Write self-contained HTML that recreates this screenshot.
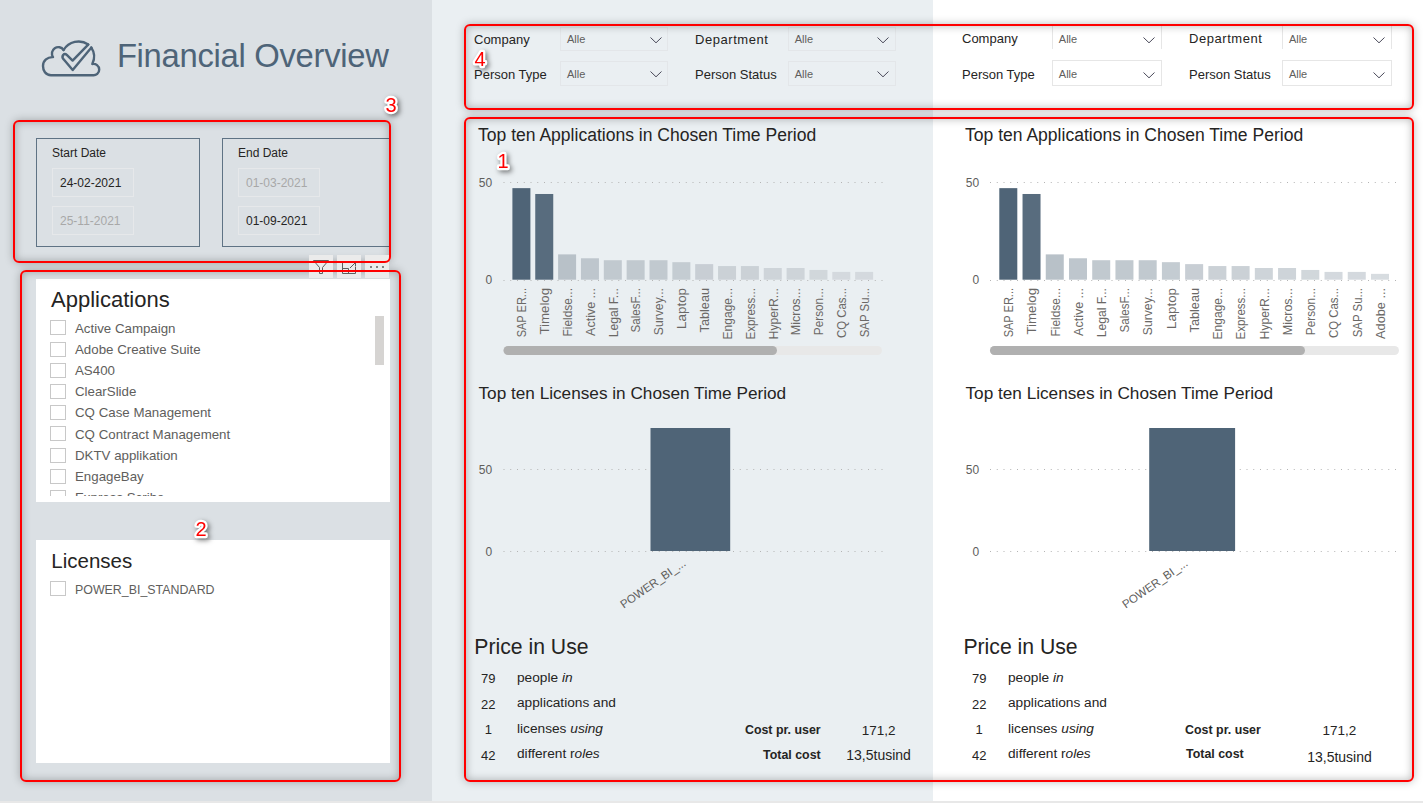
<!DOCTYPE html>
<html><head><meta charset="utf-8"><title>Financial Overview</title>
<style>
html,body{margin:0;padding:0;width:1423px;height:803px;overflow:hidden;background:#fff}
body{position:relative;font-family:"Liberation Sans", sans-serif}
.r{position:absolute}
.t{position:absolute;white-space:nowrap;line-height:1}
.lab{font-size:17px;font-weight:700;color:#ff0000;text-shadow:-1px -1px 0 #fff,1px -1px 0 #fff,-1px 1px 0 #fff,1px 1px 0 #fff,0 0 1px #fff,1px 2px 3px rgba(0,0,0,.35)}
</style></head><body>
<div class="r" style="left:0px;top:0px;width:432px;height:801px;background:#dbe0e4"></div>
<div class="r" style="left:432px;top:0px;width:501px;height:801px;background:#eaeff2"></div>
<div class="r" style="left:933px;top:0px;width:490px;height:801px;background:#ffffff"></div>
<div class="r" style="left:0px;top:801px;width:1423px;height:2px;background:#e8e8e8"></div>
<svg class="r" style="left:0;top:0" width="432" height="120" viewBox="0 0 432 120">
<g fill="none" stroke="#4e6478" stroke-width="2.4" stroke-linecap="round" stroke-linejoin="round">
<path d="M63.6,50 A17.5,17.5 0 0 1 88.3,44.4"/>
<path d="M91.2,47.4 A16.6,16.6 0 0 1 92.3,64 A5.7,5.7 0 1 1 92.6,75.2 L51,75.2 C45.5,75.2 43,70.5 43,66 C43,60.5 47.5,56.8 53,57.1 A6.3,6.3 0 0 1 63.6,50"/>
<path d="M88.2,44.6 L72.6,60.6 L66.8,54.9 Q64.8,53.1 63.1,55 Q61.6,57.3 63.6,59.3 L72.7,70 L91.4,47.6"/>
</g></svg>
<div class="t" style="left:116.90px;top:39.90px;font-size:32.8px;color:#4e6478;letter-spacing:-0.3px">Financial Overview</div>
<div class="r" style="left:36px;top:138px;width:164px;height:109px;border:1px solid #5f7384;box-sizing:border-box"></div>
<div class="r" style="left:222px;top:138px;width:178px;height:109px;border:1px solid #5f7384;box-sizing:border-box"></div>
<div class="t" style="left:52.00px;top:147.01px;font-size:12px;color:#252423;">Start Date</div>
<div class="t" style="left:238.00px;top:147.01px;font-size:12px;color:#252423;">End Date</div>
<div class="r" style="left:52px;top:168px;width:82px;height:29px;border:1px solid #e6e8ea;box-sizing:border-box"></div>
<div class="t" style="left:60.00px;top:177.01px;font-size:12px;color:#252423;">24-02-2021</div>
<div class="r" style="left:52px;top:206px;width:82px;height:29px;border:1px solid #e6e8ea;box-sizing:border-box"></div>
<div class="t" style="left:60.00px;top:215.01px;font-size:12px;color:#a8a8a8;">25-11-2021</div>
<div class="r" style="left:238px;top:168px;width:82px;height:29px;border:1px solid #e6e8ea;box-sizing:border-box"></div>
<div class="t" style="left:246.00px;top:177.01px;font-size:12px;color:#a8a8a8;">01-03-2021</div>
<div class="r" style="left:238px;top:206px;width:82px;height:29px;border:1px solid #e6e8ea;box-sizing:border-box"></div>
<div class="t" style="left:246.00px;top:215.01px;font-size:12px;color:#252423;">01-09-2021</div>
<div class="r" style="left:390px;top:130px;width:42px;height:120px;background:#dbe0e4"></div>
<div class="r" style="left:36px;top:279px;width:354px;height:223px;background:#ffffff"></div>
<div class="t" style="left:51.00px;top:289.01px;font-size:22px;color:#252423;">Applications</div>
<div class="r" style="left:36px;top:314px;width:354px;height:182px;overflow:hidden">
<div class="r" style="left:14px;top:6.30px;width:15.5px;height:15px;border:1px solid #c8c8c8;box-sizing:border-box"></div>
<div class="t" style="left:39px;top:7.54px;font-size:13.3px;color:#605e5c">Active Campaign</div>
<div class="r" style="left:14px;top:27.50px;width:15.5px;height:15px;border:1px solid #c8c8c8;box-sizing:border-box"></div>
<div class="t" style="left:39px;top:28.74px;font-size:13.3px;color:#605e5c">Adobe Creative Suite</div>
<div class="r" style="left:14px;top:48.70px;width:15.5px;height:15px;border:1px solid #c8c8c8;box-sizing:border-box"></div>
<div class="t" style="left:39px;top:49.94px;font-size:13.3px;color:#605e5c">AS400</div>
<div class="r" style="left:14px;top:69.90px;width:15.5px;height:15px;border:1px solid #c8c8c8;box-sizing:border-box"></div>
<div class="t" style="left:39px;top:71.14px;font-size:13.3px;color:#605e5c">ClearSlide</div>
<div class="r" style="left:14px;top:91.10px;width:15.5px;height:15px;border:1px solid #c8c8c8;box-sizing:border-box"></div>
<div class="t" style="left:39px;top:92.34px;font-size:13.3px;color:#605e5c">CQ Case Management</div>
<div class="r" style="left:14px;top:112.30px;width:15.5px;height:15px;border:1px solid #c8c8c8;box-sizing:border-box"></div>
<div class="t" style="left:39px;top:113.54px;font-size:13.3px;color:#605e5c">CQ Contract Management</div>
<div class="r" style="left:14px;top:133.50px;width:15.5px;height:15px;border:1px solid #c8c8c8;box-sizing:border-box"></div>
<div class="t" style="left:39px;top:134.74px;font-size:13.3px;color:#605e5c">DKTV applikation</div>
<div class="r" style="left:14px;top:154.70px;width:15.5px;height:15px;border:1px solid #c8c8c8;box-sizing:border-box"></div>
<div class="t" style="left:39px;top:155.94px;font-size:13.3px;color:#605e5c">EngageBay</div>
<div class="r" style="left:14px;top:175.90px;width:15.5px;height:15px;border:1px solid #c8c8c8;box-sizing:border-box"></div>
<div class="t" style="left:39px;top:177.14px;font-size:13.3px;color:#605e5c">Express Scribe</div>
</div>
<div class="r" style="left:375px;top:316px;width:9px;height:49px;background:#d6d4d2"></div>
<div class="r" style="left:36px;top:540px;width:354px;height:223px;background:#ffffff"></div>
<div class="t" style="left:51.30px;top:550.80px;font-size:20.5px;color:#252423;">Licenses</div>
<div class="r" style="left:50px;top:581px;width:16px;height:15px;border:1px solid #c8c8c8;box-sizing:border-box"></div>
<div class="t" style="left:75.00px;top:584.00px;font-size:12.4px;color:#605e5c;">POWER_BI_STANDARD</div>
<div class="t" style="left:474.00px;top:32.61px;font-size:13px;color:#252423;">Company</div>
<div class="t" style="left:474.00px;top:68.01px;font-size:13px;color:#252423;">Person Type</div>
<div class="r" style="left:560.2px;top:27px;width:107.8px;height:23.5px;border:1px solid #e3e6e9;box-sizing:border-box"></div>
<div class="t" style="left:567.00px;top:34.11px;font-size:11px;color:#605e5c;">Alle</div>
<svg class="r" style="left:648.5px;top:34.7px" width="14" height="10"><path d="M1.5,2.5 L7,7.8 L12.5,2.5" fill="none" stroke="#4a4a5a" stroke-width="1"/></svg>
<div class="r" style="left:560.2px;top:60.5px;width:107.8px;height:25.0px;border:1px solid #e3e6e9;box-sizing:border-box"></div>
<div class="t" style="left:567.00px;top:68.91px;font-size:11px;color:#605e5c;">Alle</div>
<svg class="r" style="left:648.5px;top:69px" width="14" height="10"><path d="M1.5,2.5 L7,7.8 L12.5,2.5" fill="none" stroke="#4a4a5a" stroke-width="1"/></svg>
<div class="t" style="left:695.00px;top:32.61px;font-size:13px;color:#252423;letter-spacing:0.55px">Department</div>
<div class="t" style="left:695.00px;top:68.01px;font-size:13px;color:#252423;">Person Status</div>
<div class="r" style="left:787.9000000000001px;top:27px;width:107.8px;height:23.5px;border:1px solid #e3e6e9;box-sizing:border-box"></div>
<div class="t" style="left:794.70px;top:34.11px;font-size:11px;color:#605e5c;">Alle</div>
<svg class="r" style="left:876.2px;top:34.7px" width="14" height="10"><path d="M1.5,2.5 L7,7.8 L12.5,2.5" fill="none" stroke="#4a4a5a" stroke-width="1"/></svg>
<div class="r" style="left:787.9000000000001px;top:60.5px;width:107.8px;height:25.0px;border:1px solid #e3e6e9;box-sizing:border-box"></div>
<div class="t" style="left:794.70px;top:68.91px;font-size:11px;color:#605e5c;">Alle</div>
<svg class="r" style="left:876.2px;top:69px" width="14" height="10"><path d="M1.5,2.5 L7,7.8 L12.5,2.5" fill="none" stroke="#4a4a5a" stroke-width="1"/></svg>
<div class="t" style="left:962.00px;top:32.01px;font-size:13px;color:#252423;">Company</div>
<div class="t" style="left:962.00px;top:67.51px;font-size:13px;color:#252423;">Person Type</div>
<div class="r" style="left:1052.3px;top:24px;width:110px;height:24.700000000000003px;border-left:1px solid #e6e6e6;border-right:1px solid #e6e6e6;box-sizing:border-box"></div>
<div class="t" style="left:1058.80px;top:33.80px;font-size:11px;color:#605e5c;">Alle</div>
<svg class="r" style="left:1141.8px;top:34.6px" width="14" height="10"><path d="M1.5,2.5 L7,7.8 L12.5,2.5" fill="none" stroke="#4a4a5a" stroke-width="1"/></svg>
<div class="r" style="left:1052.3px;top:60.2px;width:110px;height:25.799999999999997px;border:1px solid #e6e6e6;box-sizing:border-box"></div>
<div class="t" style="left:1058.80px;top:68.61px;font-size:11px;color:#605e5c;">Alle</div>
<svg class="r" style="left:1141.8px;top:70px" width="14" height="10"><path d="M1.5,2.5 L7,7.8 L12.5,2.5" fill="none" stroke="#4a4a5a" stroke-width="1"/></svg>
<div class="t" style="left:1189.00px;top:32.01px;font-size:13px;color:#252423;letter-spacing:0.55px">Department</div>
<div class="t" style="left:1189.00px;top:67.51px;font-size:13px;color:#252423;">Person Status</div>
<div class="r" style="left:1282.4px;top:24px;width:110px;height:24.700000000000003px;border-left:1px solid #e6e6e6;border-right:1px solid #e6e6e6;box-sizing:border-box"></div>
<div class="t" style="left:1288.90px;top:33.80px;font-size:11px;color:#605e5c;">Alle</div>
<svg class="r" style="left:1371.9px;top:34.6px" width="14" height="10"><path d="M1.5,2.5 L7,7.8 L12.5,2.5" fill="none" stroke="#4a4a5a" stroke-width="1"/></svg>
<div class="r" style="left:1282.4px;top:60.2px;width:110px;height:25.799999999999997px;border:1px solid #e6e6e6;box-sizing:border-box"></div>
<div class="t" style="left:1288.90px;top:68.61px;font-size:11px;color:#605e5c;">Alle</div>
<svg class="r" style="left:1371.9px;top:70px" width="14" height="10"><path d="M1.5,2.5 L7,7.8 L12.5,2.5" fill="none" stroke="#4a4a5a" stroke-width="1"/></svg>
<div class="t" style="left:478.00px;top:127.02px;font-size:17.55px;color:#252423;">Top ten Applications in Chosen Time Period</div>
<div class="t" style="left:92.20px;width:400px;text-align:right;top:176.60px;font-size:12px;color:#605e5c;">50</div>
<div class="t" style="left:92.20px;width:400px;text-align:right;top:273.71px;font-size:12px;color:#605e5c;">0</div>
<svg class="r" style="left:0;top:0" width="1423" height="803"><line x1="503.5" y1="182.5" x2="884" y2="182.5" stroke="#b4b4b4" stroke-width="1" stroke-dasharray="1 5.75"/><rect x="512.40" y="188.14" width="18" height="91.56" fill="#4f6477"/><rect x="535.25" y="193.99" width="18" height="85.71" fill="#586c7e"/><rect x="558.10" y="254.38" width="18" height="25.32" fill="#b8c1c8"/><rect x="580.95" y="258.27" width="18" height="21.43" fill="#bec6cd"/><rect x="603.80" y="260.22" width="18" height="19.48" fill="#c1c9cf"/><rect x="626.65" y="260.22" width="18" height="19.48" fill="#c1c9cf"/><rect x="649.50" y="260.22" width="18" height="19.48" fill="#c1c9cf"/><rect x="672.35" y="262.17" width="18" height="17.53" fill="#c4ccd2"/><rect x="695.20" y="264.12" width="18" height="15.58" fill="#c8ced4"/><rect x="718.05" y="266.06" width="18" height="13.64" fill="#cbd1d6"/><rect x="740.90" y="266.06" width="18" height="13.64" fill="#cbd1d6"/><rect x="763.75" y="268.01" width="18" height="11.69" fill="#ced4d9"/><rect x="786.60" y="268.01" width="18" height="11.69" fill="#ced4d9"/><rect x="809.45" y="269.96" width="18" height="9.74" fill="#d1d7db"/><rect x="832.30" y="271.91" width="18" height="7.79" fill="#d4d9de"/><rect x="855.15" y="271.91" width="18" height="7.79" fill="#d4d9de"/><line x1="503.5" y1="280.5" x2="884" y2="280.5" stroke="#b4b4b4" stroke-width="1" stroke-dasharray="1 5.75"/><text x="0" y="0" transform="translate(526.20,288) rotate(-90)" text-anchor="end" font-size="12.5" fill="#6a6866" font-family="Liberation Sans" textLength="49.3" lengthAdjust="spacingAndGlyphs">SAP ER...</text><text x="0" y="0" transform="translate(549.05,288) rotate(-90)" text-anchor="end" font-size="12.5" fill="#6a6866" font-family="Liberation Sans" textLength="46.5" lengthAdjust="spacingAndGlyphs">Timelog</text><text x="0" y="0" transform="translate(571.90,288) rotate(-90)" text-anchor="end" font-size="12.5" fill="#6a6866" font-family="Liberation Sans" textLength="48.6" lengthAdjust="spacingAndGlyphs">Fieldse...</text><text x="0" y="0" transform="translate(594.75,288) rotate(-90)" text-anchor="end" font-size="12.5" fill="#6a6866" font-family="Liberation Sans" textLength="47.9" lengthAdjust="spacingAndGlyphs">Active ...</text><text x="0" y="0" transform="translate(617.60,288) rotate(-90)" text-anchor="end" font-size="12.5" fill="#6a6866" font-family="Liberation Sans" textLength="49.3" lengthAdjust="spacingAndGlyphs">Legal F...</text><text x="0" y="0" transform="translate(640.45,288) rotate(-90)" text-anchor="end" font-size="12.5" fill="#6a6866" font-family="Liberation Sans" textLength="44.4" lengthAdjust="spacingAndGlyphs">SalesF...</text><text x="0" y="0" transform="translate(663.30,288) rotate(-90)" text-anchor="end" font-size="12.5" fill="#6a6866" font-family="Liberation Sans" textLength="47.2" lengthAdjust="spacingAndGlyphs">Survey...</text><text x="0" y="0" transform="translate(686.15,288) rotate(-90)" text-anchor="end" font-size="12.5" fill="#6a6866" font-family="Liberation Sans" textLength="40.9" lengthAdjust="spacingAndGlyphs">Laptop</text><text x="0" y="0" transform="translate(709.00,288) rotate(-90)" text-anchor="end" font-size="12.5" fill="#6a6866" font-family="Liberation Sans" textLength="44.4" lengthAdjust="spacingAndGlyphs">Tableau</text><text x="0" y="0" transform="translate(731.85,288) rotate(-90)" text-anchor="end" font-size="12.5" fill="#6a6866" font-family="Liberation Sans" textLength="51.4" lengthAdjust="spacingAndGlyphs">Engage...</text><text x="0" y="0" transform="translate(754.70,288) rotate(-90)" text-anchor="end" font-size="12.5" fill="#6a6866" font-family="Liberation Sans" textLength="51.4" lengthAdjust="spacingAndGlyphs">Express...</text><text x="0" y="0" transform="translate(777.55,288) rotate(-90)" text-anchor="end" font-size="12.5" fill="#6a6866" font-family="Liberation Sans" textLength="51.4" lengthAdjust="spacingAndGlyphs">HyperR...</text><text x="0" y="0" transform="translate(800.40,288) rotate(-90)" text-anchor="end" font-size="12.5" fill="#6a6866" font-family="Liberation Sans" textLength="47.2" lengthAdjust="spacingAndGlyphs">Micros...</text><text x="0" y="0" transform="translate(823.25,288) rotate(-90)" text-anchor="end" font-size="12.5" fill="#6a6866" font-family="Liberation Sans" textLength="47.2" lengthAdjust="spacingAndGlyphs">Person...</text><text x="0" y="0" transform="translate(846.10,288) rotate(-90)" text-anchor="end" font-size="12.5" fill="#6a6866" font-family="Liberation Sans" textLength="50.0" lengthAdjust="spacingAndGlyphs">CQ Cas...</text><text x="0" y="0" transform="translate(868.95,288) rotate(-90)" text-anchor="end" font-size="12.5" fill="#6a6866" font-family="Liberation Sans" textLength="49.3" lengthAdjust="spacingAndGlyphs">SAP Su...</text><rect x="503.5" y="346" width="378.5" height="9" rx="4.5" fill="#e8e8e8"/><rect x="503.5" y="346" width="273.5" height="9" rx="4.5" fill="#b0b0b0"/></svg>
<div class="t" style="left:965.00px;top:127.02px;font-size:17.55px;color:#252423;">Top ten Applications in Chosen Time Period</div>
<div class="t" style="left:579.20px;width:400px;text-align:right;top:176.60px;font-size:12px;color:#605e5c;">50</div>
<div class="t" style="left:579.20px;width:400px;text-align:right;top:273.71px;font-size:12px;color:#605e5c;">0</div>
<svg class="r" style="left:0;top:0" width="1423" height="803"><line x1="990" y1="182.5" x2="1398" y2="182.5" stroke="#b4b4b4" stroke-width="1" stroke-dasharray="1 5.75"/><rect x="999.30" y="188.14" width="18" height="91.56" fill="#4f6477"/><rect x="1022.53" y="193.99" width="18" height="85.71" fill="#586c7e"/><rect x="1045.76" y="254.38" width="18" height="25.32" fill="#b8c1c8"/><rect x="1068.99" y="258.27" width="18" height="21.43" fill="#bec6cd"/><rect x="1092.22" y="260.22" width="18" height="19.48" fill="#c1c9cf"/><rect x="1115.45" y="260.22" width="18" height="19.48" fill="#c1c9cf"/><rect x="1138.68" y="260.22" width="18" height="19.48" fill="#c1c9cf"/><rect x="1161.91" y="262.17" width="18" height="17.53" fill="#c4ccd2"/><rect x="1185.14" y="264.12" width="18" height="15.58" fill="#c8ced4"/><rect x="1208.37" y="266.06" width="18" height="13.64" fill="#cbd1d6"/><rect x="1231.60" y="266.06" width="18" height="13.64" fill="#cbd1d6"/><rect x="1254.83" y="268.01" width="18" height="11.69" fill="#ced4d9"/><rect x="1278.06" y="268.01" width="18" height="11.69" fill="#ced4d9"/><rect x="1301.29" y="269.96" width="18" height="9.74" fill="#d1d7db"/><rect x="1324.52" y="271.91" width="18" height="7.79" fill="#d4d9de"/><rect x="1347.75" y="271.91" width="18" height="7.79" fill="#d4d9de"/><rect x="1370.98" y="273.86" width="18" height="5.84" fill="#d7dce0"/><line x1="990" y1="280.5" x2="1398" y2="280.5" stroke="#b4b4b4" stroke-width="1" stroke-dasharray="1 5.75"/><text x="0" y="0" transform="translate(1013.10,288) rotate(-90)" text-anchor="end" font-size="12.5" fill="#6a6866" font-family="Liberation Sans" textLength="49.3" lengthAdjust="spacingAndGlyphs">SAP ER...</text><text x="0" y="0" transform="translate(1036.33,288) rotate(-90)" text-anchor="end" font-size="12.5" fill="#6a6866" font-family="Liberation Sans" textLength="46.5" lengthAdjust="spacingAndGlyphs">Timelog</text><text x="0" y="0" transform="translate(1059.56,288) rotate(-90)" text-anchor="end" font-size="12.5" fill="#6a6866" font-family="Liberation Sans" textLength="48.6" lengthAdjust="spacingAndGlyphs">Fieldse...</text><text x="0" y="0" transform="translate(1082.79,288) rotate(-90)" text-anchor="end" font-size="12.5" fill="#6a6866" font-family="Liberation Sans" textLength="47.9" lengthAdjust="spacingAndGlyphs">Active ...</text><text x="0" y="0" transform="translate(1106.02,288) rotate(-90)" text-anchor="end" font-size="12.5" fill="#6a6866" font-family="Liberation Sans" textLength="49.3" lengthAdjust="spacingAndGlyphs">Legal F...</text><text x="0" y="0" transform="translate(1129.25,288) rotate(-90)" text-anchor="end" font-size="12.5" fill="#6a6866" font-family="Liberation Sans" textLength="44.4" lengthAdjust="spacingAndGlyphs">SalesF...</text><text x="0" y="0" transform="translate(1152.48,288) rotate(-90)" text-anchor="end" font-size="12.5" fill="#6a6866" font-family="Liberation Sans" textLength="47.2" lengthAdjust="spacingAndGlyphs">Survey...</text><text x="0" y="0" transform="translate(1175.71,288) rotate(-90)" text-anchor="end" font-size="12.5" fill="#6a6866" font-family="Liberation Sans" textLength="40.9" lengthAdjust="spacingAndGlyphs">Laptop</text><text x="0" y="0" transform="translate(1198.94,288) rotate(-90)" text-anchor="end" font-size="12.5" fill="#6a6866" font-family="Liberation Sans" textLength="44.4" lengthAdjust="spacingAndGlyphs">Tableau</text><text x="0" y="0" transform="translate(1222.17,288) rotate(-90)" text-anchor="end" font-size="12.5" fill="#6a6866" font-family="Liberation Sans" textLength="51.4" lengthAdjust="spacingAndGlyphs">Engage...</text><text x="0" y="0" transform="translate(1245.40,288) rotate(-90)" text-anchor="end" font-size="12.5" fill="#6a6866" font-family="Liberation Sans" textLength="51.4" lengthAdjust="spacingAndGlyphs">Express...</text><text x="0" y="0" transform="translate(1268.63,288) rotate(-90)" text-anchor="end" font-size="12.5" fill="#6a6866" font-family="Liberation Sans" textLength="51.4" lengthAdjust="spacingAndGlyphs">HyperR...</text><text x="0" y="0" transform="translate(1291.86,288) rotate(-90)" text-anchor="end" font-size="12.5" fill="#6a6866" font-family="Liberation Sans" textLength="47.2" lengthAdjust="spacingAndGlyphs">Micros...</text><text x="0" y="0" transform="translate(1315.09,288) rotate(-90)" text-anchor="end" font-size="12.5" fill="#6a6866" font-family="Liberation Sans" textLength="47.2" lengthAdjust="spacingAndGlyphs">Person...</text><text x="0" y="0" transform="translate(1338.32,288) rotate(-90)" text-anchor="end" font-size="12.5" fill="#6a6866" font-family="Liberation Sans" textLength="50.0" lengthAdjust="spacingAndGlyphs">CQ Cas...</text><text x="0" y="0" transform="translate(1361.55,288) rotate(-90)" text-anchor="end" font-size="12.5" fill="#6a6866" font-family="Liberation Sans" textLength="49.3" lengthAdjust="spacingAndGlyphs">SAP Su...</text><text x="0" y="0" transform="translate(1384.78,288) rotate(-90)" text-anchor="end" font-size="12.5" fill="#6a6866" font-family="Liberation Sans" textLength="50.9" lengthAdjust="spacingAndGlyphs">Adobe ...</text><rect x="990" y="346" width="409" height="9" rx="4.5" fill="#e8e8e8"/><rect x="990" y="346" width="315" height="9" rx="4.5" fill="#b0b0b0"/></svg>
<div class="t" style="left:478.50px;top:385.30px;font-size:17.2px;color:#252423;">Top ten Licenses in Chosen Time Period</div>
<div class="t" style="left:92.20px;width:400px;text-align:right;top:463.81px;font-size:12px;color:#605e5c;">50</div>
<div class="t" style="left:92.20px;width:400px;text-align:right;top:546.21px;font-size:12px;color:#605e5c;">0</div>
<svg class="r" style="left:0;top:0" width="1423" height="803"><line x1="503.5" y1="469.5" x2="884" y2="469.5" stroke="#b4b4b4" stroke-width="1" stroke-dasharray="1 5.75"/><rect x="650.5" y="428" width="79.70000000000005" height="123" fill="#4f6477"/><line x1="503.5" y1="551.5" x2="884" y2="551.5" stroke="#b4b4b4" stroke-width="1" stroke-dasharray="1 5.75"/><text x="0" y="0" transform="translate(686.5,564.8) rotate(-35)" text-anchor="end" font-size="11.5" fill="#605e5c" font-family="Liberation Sans">POWER_BI_...</text></svg>
<div class="t" style="left:965.50px;top:385.30px;font-size:17.2px;color:#252423;">Top ten Licenses in Chosen Time Period</div>
<div class="t" style="left:579.20px;width:400px;text-align:right;top:463.81px;font-size:12px;color:#605e5c;">50</div>
<div class="t" style="left:579.20px;width:400px;text-align:right;top:546.21px;font-size:12px;color:#605e5c;">0</div>
<svg class="r" style="left:0;top:0" width="1423" height="803"><line x1="990" y1="469.5" x2="1398" y2="469.5" stroke="#b4b4b4" stroke-width="1" stroke-dasharray="1 5.75"/><rect x="1149.2" y="428" width="85.89999999999986" height="123" fill="#4f6477"/><line x1="990" y1="551.5" x2="1398" y2="551.5" stroke="#b4b4b4" stroke-width="1" stroke-dasharray="1 5.75"/><text x="0" y="0" transform="translate(1188.5,564.8) rotate(-35)" text-anchor="end" font-size="11.5" fill="#605e5c" font-family="Liberation Sans">POWER_BI_...</text></svg>
<div class="t" style="left:474.30px;top:636.00px;font-size:21.2px;color:#252423;">Price in Use</div>
<div class="t" style="left:288.30px;width:400px;text-align:center;top:671.92px;font-size:13px;color:#252423;">79</div>
<div class="t" style="left:517.00px;top:670.90px;font-size:13.7px;color:#252423;">people <i>in</i></div>
<div class="t" style="left:288.30px;width:400px;text-align:center;top:697.71px;font-size:13px;color:#252423;">22</div>
<div class="t" style="left:517.00px;top:696.31px;font-size:13.7px;color:#252423;">applications and</div>
<div class="t" style="left:288.30px;width:400px;text-align:center;top:723.21px;font-size:13px;color:#252423;">1</div>
<div class="t" style="left:517.00px;top:722.21px;font-size:13.7px;color:#252423;">licenses <i>using</i></div>
<div class="t" style="left:288.30px;width:400px;text-align:center;top:748.81px;font-size:13px;color:#252423;">42</div>
<div class="t" style="left:517.00px;top:747.40px;font-size:13.7px;color:#252423;">different r<i>oles</i></div>
<div class="t" style="left:420.70px;width:400px;text-align:right;top:723.91px;font-size:12.4px;color:#252423;font-weight:700;">Cost pr. user</div>
<div class="t" style="left:420.70px;width:400px;text-align:right;top:748.50px;font-size:12.4px;color:#252423;font-weight:700;">Total cost</div>
<div class="t" style="left:678.60px;width:400px;text-align:center;top:724.01px;font-size:13.5px;color:#252423;">171,2</div>
<div class="t" style="left:678.60px;width:400px;text-align:center;top:748.31px;font-size:14px;color:#252423;">13,5tusind</div>
<div class="t" style="left:963.40px;top:636.00px;font-size:21.2px;color:#252423;">Price in Use</div>
<div class="t" style="left:779.20px;width:400px;text-align:center;top:671.92px;font-size:13px;color:#252423;">79</div>
<div class="t" style="left:1008.00px;top:670.90px;font-size:13.7px;color:#252423;">people <i>in</i></div>
<div class="t" style="left:779.20px;width:400px;text-align:center;top:697.71px;font-size:13px;color:#252423;">22</div>
<div class="t" style="left:1008.00px;top:696.31px;font-size:13.7px;color:#252423;">applications and</div>
<div class="t" style="left:779.20px;width:400px;text-align:center;top:723.21px;font-size:13px;color:#252423;">1</div>
<div class="t" style="left:1008.00px;top:722.21px;font-size:13.7px;color:#252423;">licenses <i>using</i></div>
<div class="t" style="left:779.20px;width:400px;text-align:center;top:748.81px;font-size:13px;color:#252423;">42</div>
<div class="t" style="left:1008.00px;top:747.40px;font-size:13.7px;color:#252423;">different r<i>oles</i></div>
<div class="t" style="left:1185.10px;top:723.61px;font-size:12.4px;color:#252423;font-weight:700;">Cost pr. user</div>
<div class="t" style="left:1186.10px;top:748.41px;font-size:12.4px;color:#252423;font-weight:700;">Total cost</div>
<div class="t" style="left:1139.50px;width:400px;text-align:center;top:724.01px;font-size:13.5px;color:#252423;">171,2</div>
<div class="t" style="left:1139.50px;width:400px;text-align:center;top:749.51px;font-size:14px;color:#252423;">13,5tusind</div>
<div class="r" style="left:13px;top:119.5px;width:377.6px;height:143.0px;border:2.2px solid transparent;border-radius:6px;box-sizing:border-box;box-shadow:0 0 8px rgba(0,0,0,0.26), inset 0 0 8px rgba(0,0,0,0.28)"></div>
<div class="r" style="left:20px;top:270px;width:381px;height:512px;border:2.2px solid transparent;border-radius:6px;box-sizing:border-box;box-shadow:0 0 8px rgba(0,0,0,0.26), inset 0 0 8px rgba(0,0,0,0.28)"></div>
<div class="r" style="left:464px;top:23.5px;width:950px;height:86.0px;border:2.2px solid transparent;border-radius:6px;box-sizing:border-box;box-shadow:0 0 8px rgba(0,0,0,0.26), inset 0 0 8px rgba(0,0,0,0.28)"></div>
<div class="r" style="left:464px;top:117px;width:950px;height:665px;border:2.2px solid transparent;border-radius:6px;box-sizing:border-box;box-shadow:0 0 8px rgba(0,0,0,0.26), inset 0 0 8px rgba(0,0,0,0.28)"></div>
<div class="r" style="left:309px;top:255px;width:24px;height:23px;background:#ebebeb"></div>
<div class="r" style="left:337px;top:255px;width:24px;height:23px;background:#ebebeb"></div>
<div class="r" style="left:365px;top:255px;width:24px;height:23px;background:#ebebeb"></div>
<svg class="r" style="left:300px;top:250px" width="100" height="32" viewBox="300 250 100 32">
<g fill="none" stroke="#5e5e5e" stroke-width="1">
<path d="M313.5,260.5 L328.5,260.5 L322.5,267.5 L322.5,273.5 L319.5,273.5 L319.5,267.5 Z"/>
<path d="M349.5,262.5 L342.5,262.5 L342.5,273.5 L355.5,273.5 L355.5,266.5"/>
<path d="M342.5,268.5 L348.5,268.5 L348.5,273.5"/>
<path d="M350,268 L355.5,262.5 M351.5,262.5 L355.5,262.5 L355.5,266"/>
</g>
<g fill="#5e5e5e"><circle cx="371" cy="267" r="1"/><circle cx="377" cy="267" r="1"/><circle cx="383" cy="267" r="1"/></g>
</svg>
<div class="r" style="left:13px;top:119.5px;width:377.6px;height:143.0px;border:2.2px solid #ff0000;border-radius:6px;box-sizing:border-box"></div>
<div class="r" style="left:20px;top:270px;width:381px;height:512px;border:2.2px solid #ff0000;border-radius:6px;box-sizing:border-box"></div>
<div class="r" style="left:464px;top:23.5px;width:950px;height:86.0px;border:2.2px solid #ff0000;border-radius:6px;box-sizing:border-box"></div>
<div class="r" style="left:464px;top:117px;width:950px;height:665px;border:2.2px solid #ff0000;border-radius:6px;box-sizing:border-box"></div>
<svg class="r" style="left:376.25px;top:86.60px;overflow:visible;filter:drop-shadow(2px 2px 2.5px rgba(0,0,0,0.5))" width="30" height="32"><text x="15" y="25" text-anchor="middle" font-family="Liberation Sans" font-size="20" fill="#ff0000" stroke="#ffffff" stroke-width="4.4" stroke-linejoin="round" paint-order="stroke">3</text></svg>
<svg class="r" style="left:186.15px;top:510.70px;overflow:visible;filter:drop-shadow(2px 2px 2.5px rgba(0,0,0,0.5))" width="30" height="32"><text x="15" y="25" text-anchor="middle" font-family="Liberation Sans" font-size="20" fill="#ff0000" stroke="#ffffff" stroke-width="4.4" stroke-linejoin="round" paint-order="stroke">2</text></svg>
<svg class="r" style="left:465.00px;top:40.75px;overflow:visible;filter:drop-shadow(2px 2px 2.5px rgba(0,0,0,0.5))" width="30" height="32"><text x="15" y="25" text-anchor="middle" font-family="Liberation Sans" font-size="20" fill="#ff0000" stroke="#ffffff" stroke-width="4.4" stroke-linejoin="round" paint-order="stroke">4</text></svg>
<svg class="r" style="left:487.50px;top:142.75px;overflow:visible;filter:drop-shadow(2px 2px 2.5px rgba(0,0,0,0.5))" width="30" height="32"><text x="15" y="25" text-anchor="middle" font-family="Liberation Sans" font-size="20" fill="#ff0000" stroke="#ffffff" stroke-width="4.4" stroke-linejoin="round" paint-order="stroke">1</text></svg>
</body></html>
